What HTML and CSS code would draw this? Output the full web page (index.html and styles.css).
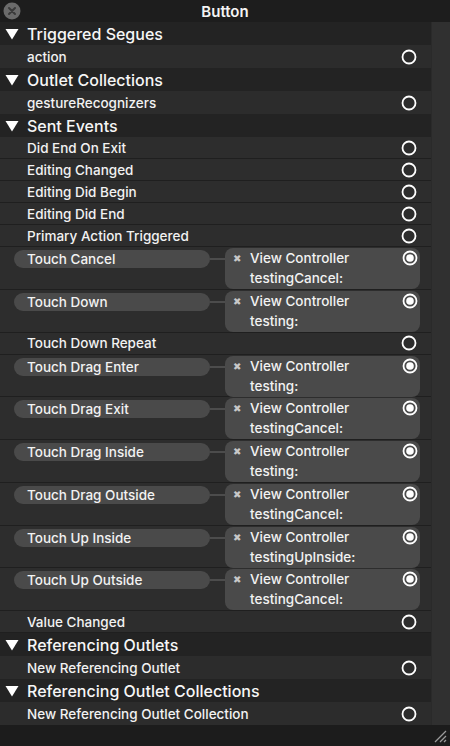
FILE: index.html
```html
<!DOCTYPE html>
<html>
<head>
<meta charset="utf-8">
<link rel="stylesheet" href="styles.css">
</head>
<body>
<div class="window">
  <div class="titlebar">
    <div class="tb-left"><span class="close"><svg width="18" height="18" viewBox="0 0 18 18"><circle cx="9" cy="9" r="8.5" fill="#6b6b6b"/><path d="M6 6 L12 12 M12 6 L6 12" stroke="#3a3a3a" stroke-width="2" stroke-linecap="round"/></svg></span></div>
    <div class="title">Button</div>
    <div class="tb-right"></div>
  </div>
  <div class="main">
    <div class="list">
      <div class="row header"><svg class="tri" width="14" height="12" viewBox="0 0 14 12"><path d="M0.5 1 H13.5 L7 11.5 Z" fill="#fff"/></svg><span>Triggered Segues</span></div>
      <div class="row item top"><span class="label">action</span><svg class="ring" width="16" height="16" viewBox="0 0 16 16"><circle cx="8" cy="8" r="6.5" fill="none" stroke="#fff" stroke-width="1.8"/></svg></div>
      <div class="row header"><svg class="tri" width="14" height="12" viewBox="0 0 14 12"><path d="M0.5 1 H13.5 L7 11.5 Z" fill="#fff"/></svg><span>Outlet Collections</span></div>
      <div class="row item top"><span class="label">gestureRecognizers</span><svg class="ring" width="16" height="16" viewBox="0 0 16 16"><circle cx="8" cy="8" r="6.5" fill="none" stroke="#fff" stroke-width="1.8"/></svg></div>
      <div class="row header"><svg class="tri" width="14" height="12" viewBox="0 0 14 12"><path d="M0.5 1 H13.5 L7 11.5 Z" fill="#fff"/></svg><span>Sent Events</span></div>

      <div class="row item ev"><span class="label">Did End On Exit</span><svg class="ring" width="16" height="16" viewBox="0 0 16 16"><circle cx="8" cy="8" r="6.5" fill="none" stroke="#fff" stroke-width="1.8"/></svg></div>
      <div class="row item ev"><span class="label">Editing Changed</span><svg class="ring" width="16" height="16" viewBox="0 0 16 16"><circle cx="8" cy="8" r="6.5" fill="none" stroke="#fff" stroke-width="1.8"/></svg></div>
      <div class="row item ev"><span class="label">Editing Did Begin</span><svg class="ring" width="16" height="16" viewBox="0 0 16 16"><circle cx="8" cy="8" r="6.5" fill="none" stroke="#fff" stroke-width="1.8"/></svg></div>
      <div class="row item ev"><span class="label">Editing Did End</span><svg class="ring" width="16" height="16" viewBox="0 0 16 16"><circle cx="8" cy="8" r="6.5" fill="none" stroke="#fff" stroke-width="1.8"/></svg></div>
      <div class="row item ev"><span class="label">Primary Action Triggered</span><svg class="ring" width="16" height="16" viewBox="0 0 16 16"><circle cx="8" cy="8" r="6.5" fill="none" stroke="#fff" stroke-width="1.8"/></svg></div>

      <div class="row conn"><div class="pill">Touch Cancel</div><div class="wire"></div><div class="target"><span class="x">✖</span><div class="tlines"><div>View Controller</div><div>testingCancel:</div></div><svg class="ring" width="16" height="16" viewBox="0 0 16 16"><circle cx="8" cy="8" r="6.5" fill="none" stroke="#fff" stroke-width="1.8"/><circle cx="8" cy="8" r="3.8" fill="#fff"/></svg></div></div>
      <div class="row conn"><div class="pill">Touch Down</div><div class="wire"></div><div class="target"><span class="x">✖</span><div class="tlines"><div>View Controller</div><div>testing:</div></div><svg class="ring" width="16" height="16" viewBox="0 0 16 16"><circle cx="8" cy="8" r="6.5" fill="none" stroke="#fff" stroke-width="1.8"/><circle cx="8" cy="8" r="3.8" fill="#fff"/></svg></div></div>
      <div class="row item ev"><span class="label">Touch Down Repeat</span><svg class="ring" width="16" height="16" viewBox="0 0 16 16"><circle cx="8" cy="8" r="6.5" fill="none" stroke="#fff" stroke-width="1.8"/></svg></div>
      <div class="row conn"><div class="pill">Touch Drag Enter</div><div class="wire"></div><div class="target"><span class="x">✖</span><div class="tlines"><div>View Controller</div><div>testing:</div></div><svg class="ring" width="16" height="16" viewBox="0 0 16 16"><circle cx="8" cy="8" r="6.5" fill="none" stroke="#fff" stroke-width="1.8"/><circle cx="8" cy="8" r="3.8" fill="#fff"/></svg></div></div>
      <div class="row conn"><div class="pill">Touch Drag Exit</div><div class="wire"></div><div class="target"><span class="x">✖</span><div class="tlines"><div>View Controller</div><div>testingCancel:</div></div><svg class="ring" width="16" height="16" viewBox="0 0 16 16"><circle cx="8" cy="8" r="6.5" fill="none" stroke="#fff" stroke-width="1.8"/><circle cx="8" cy="8" r="3.8" fill="#fff"/></svg></div></div>
      <div class="row conn"><div class="pill">Touch Drag Inside</div><div class="wire"></div><div class="target"><span class="x">✖</span><div class="tlines"><div>View Controller</div><div>testing:</div></div><svg class="ring" width="16" height="16" viewBox="0 0 16 16"><circle cx="8" cy="8" r="6.5" fill="none" stroke="#fff" stroke-width="1.8"/><circle cx="8" cy="8" r="3.8" fill="#fff"/></svg></div></div>
      <div class="row conn"><div class="pill">Touch Drag Outside</div><div class="wire"></div><div class="target"><span class="x">✖</span><div class="tlines"><div>View Controller</div><div>testingCancel:</div></div><svg class="ring" width="16" height="16" viewBox="0 0 16 16"><circle cx="8" cy="8" r="6.5" fill="none" stroke="#fff" stroke-width="1.8"/><circle cx="8" cy="8" r="3.8" fill="#fff"/></svg></div></div>
      <div class="row conn"><div class="pill">Touch Up Inside</div><div class="wire"></div><div class="target"><span class="x">✖</span><div class="tlines"><div>View Controller</div><div>testingUpInside:</div></div><svg class="ring" width="16" height="16" viewBox="0 0 16 16"><circle cx="8" cy="8" r="6.5" fill="none" stroke="#fff" stroke-width="1.8"/><circle cx="8" cy="8" r="3.8" fill="#fff"/></svg></div></div>
      <div class="row conn"><div class="pill">Touch Up Outside</div><div class="wire"></div><div class="target"><span class="x">✖</span><div class="tlines"><div>View Controller</div><div>testingCancel:</div></div><svg class="ring" width="16" height="16" viewBox="0 0 16 16"><circle cx="8" cy="8" r="6.5" fill="none" stroke="#fff" stroke-width="1.8"/><circle cx="8" cy="8" r="3.8" fill="#fff"/></svg></div></div>
      <div class="row item ev"><span class="label">Value Changed</span><svg class="ring" width="16" height="16" viewBox="0 0 16 16"><circle cx="8" cy="8" r="6.5" fill="none" stroke="#fff" stroke-width="1.8"/></svg></div>

      <div class="row header"><svg class="tri" width="14" height="12" viewBox="0 0 14 12"><path d="M0.5 1 H13.5 L7 11.5 Z" fill="#fff"/></svg><span>Referencing Outlets</span></div>
      <div class="row item top"><span class="label">New Referencing Outlet</span><svg class="ring" width="16" height="16" viewBox="0 0 16 16"><circle cx="8" cy="8" r="6.5" fill="none" stroke="#fff" stroke-width="1.8"/></svg></div>
      <div class="row header"><svg class="tri" width="14" height="12" viewBox="0 0 14 12"><path d="M0.5 1 H13.5 L7 11.5 Z" fill="#fff"/></svg><span>Referencing Outlet Collections</span></div>
      <div class="row item top"><span class="label">New Referencing Outlet Collection</span><svg class="ring" width="16" height="16" viewBox="0 0 16 16"><circle cx="8" cy="8" r="6.5" fill="none" stroke="#fff" stroke-width="1.8"/></svg></div>
    </div>
    <div class="scroll"></div>
  </div>
  <div class="footer">
    <svg class="grip" width="14" height="14" viewBox="0 0 14 14"><path d="M2 13 L13 2 M7 13 L13 7 M11 13 L13 11" stroke="#9a9a9a" stroke-width="1.3"/></svg>
  </div>
</div>
</body>
</html>
```
FILE: styles.css
```css
html, body {
  margin: 0;
  padding: 0;
  background: #262626;
}
.window {
  width: 450px;
  height: 746px;
  display: flex;
  flex-direction: column;
  font-family: Inter, "Liberation Sans", Arial, sans-serif;
  color: #f2f2f2;
  overflow: hidden;
}
.titlebar {
  height: 22px;
  flex: none;
  background: #1d1d1d;
  display: grid;
  grid-template-columns: 1fr auto 1fr;
  align-items: center;
}
.tb-left {
  display: flex;
  align-items: center;
  padding-left: 3px;
}
.close svg { display: block; }
.title {
  font-size: 15px;
  font-weight: 600;
  color: #f4f4f4;
}
.main {
  flex: 1;
  display: flex;
  min-height: 0;
}
.list {
  width: 432px;
  display: flex;
  flex-direction: column;
  background: #262626;
}
.scroll {
  width: 18px;
  background: #303030;
  border-left: 1px solid #2a2a2a;
}
.row {
  display: flex;
  align-items: center;
  box-sizing: border-box;
  flex: none;
}
.header {
  height: 23px;
  background: #232323;
  font-size: 16px;
  font-weight: 500;
  padding-left: 5px;
  color: #f6f6f6;
}
.header .tri { margin-right: 8px; }
.item {
  font-size: 13.5px;
  font-weight: 500;
  padding-left: 27px;
  padding-right: 14px;
  justify-content: space-between;
}
.item.top {
  height: 23px;
  background: #2c2c2c;
}
.item.ev {
  height: 22px;
  background: #2d2d2d;
  border-bottom: 1px solid #1f1f1f;
}
.ring { display: block; flex: none; }
.conn {
  height: 42.75px;
  align-items: flex-start;
  background: #2d2d2d;
  border-bottom: 1px solid #1f1f1f;
  padding-left: 14px;
  font-size: 13.5px;
  font-weight: 500;
}
.pill {
  width: 196px;
  height: 18px;
  margin-top: 3px;
  background: #4a4a4a;
  border-radius: 9px;
  box-sizing: border-box;
  padding-left: 13px;
  line-height: 18px;
  flex: none;
}
.wire {
  width: 15px;
  height: 2px;
  margin-top: 11px;
  background: #4c4c4c;
  flex: none;
}
.target {
  width: 195px;
  height: 41px;
  margin-top: 1px;
  background: #4a4a4a;
  border-radius: 8px;
  display: flex;
  align-items: flex-start;
  box-sizing: border-box;
  padding-left: 8px;
  padding-right: 2px;
  flex: none;
}
.target .x {
  font-size: 10px;
  color: #c8c8c8;
  width: 17px;
  line-height: 20px;
  flex: none;
}
.tlines {
  flex: 1;
  line-height: 20px;
}
.target .ring { margin-top: 2px; }
.footer {
  height: 21px;
  flex: none;
  background: #1c1c1c;
  display: flex;
  justify-content: flex-end;
  align-items: flex-end;
  padding-right: 3px;
  padding-bottom: 3px;
  box-sizing: border-box;
}
.grip { display: block; }
```
